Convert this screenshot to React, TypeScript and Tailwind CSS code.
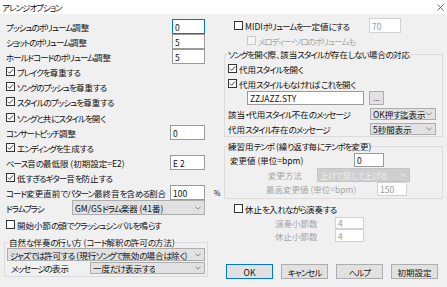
import React from "react";

// Meiryo UI draws kana narrower than kanji; tighten kana runs to match
const J = (s: string) =>
  s.split(/([\u3041-\u30ff]+)/).map((p, i) =>
    /[\u3041-\u30ff]/.test(p) ? (
      <span key={i} className="tracking-[-1px]">
        {p}
      </span>
    ) : (
      p
    )
  );

const Check = ({ checked = false, disabled = false }: { checked?: boolean; disabled?: boolean }) => (
  <span
    className={`w-[9px] h-[9px] border flex items-center justify-center shrink-0 ${
      disabled ? "border-[#c8c8c8] bg-[#f4f4f4]" : "border-[#333] bg-white"
    }`}
  >
    {checked && (
      <svg viewBox="0 0 9 9" className="w-[7px] h-[7px]">
        <path d="M1.2 4.6 L3.4 6.8 L7.8 1.8" stroke="#222" fill="none" strokeWidth="1.1" />
      </svg>
    )}
  </span>
);

const CheckRow = ({
  label,
  checked = false,
  disabled = false,
  className = "",
}: {
  label: string;
  checked?: boolean;
  disabled?: boolean;
  className?: string;
}) => (
  <div className={`flex items-center h-[15px] gap-[2px] ${className}`}>
    <Check checked={checked} disabled={disabled} />
    <span className={`whitespace-nowrap ${disabled ? "text-[#a6a6a6]" : ""}`}>{J(label)}</span>
  </div>
);

const TextBox = ({
  value,
  w,
  focused = false,
  disabled = false,
}: {
  value: string;
  w: string;
  focused?: boolean;
  disabled?: boolean;
}) => (
  <div
    className={`${w} h-full border bg-white flex items-center px-[2px] shrink-0 ${
      focused ? "border-[#0078d7]" : disabled ? "border-[#d2d2d2] text-[#9a9a9a]" : "border-[#9a9a9a]"
    }`}
  >
    {value}
  </div>
);

const Chevron = ({ color = "#707070" }: { color?: string }) => (
  <svg viewBox="0 0 7 4" className="w-[6px] h-[4px] shrink-0">
    <path d="M0.5 0.5 L3.5 3.3 L6.5 0.5" stroke={color} fill="none" strokeWidth="0.9" />
  </svg>
);

const Combo = ({
  value,
  w,
  disabled = false,
}: {
  value: string;
  w: string;
  disabled?: boolean;
}) => (
  <div
    className={`${w} h-full border flex items-center justify-between pl-[2px] pr-[3px] shrink-0 ${
      disabled ? "bg-[#cfcfcf] border-[#c4c4c4] text-[#ededed]" : "bg-[#e1e1e1] border-[#adadad]"
    }`}
  >
    <span className="whitespace-nowrap overflow-hidden">{J(value)}</span>
    <Chevron color={disabled ? "#ededed" : "#707070"} />
  </div>
);

const Btn = ({ label, primary = false }: { label: string; primary?: boolean }) => (
  <div
    className={`w-[47px] h-[15px] bg-[#e1e1e1] border flex items-center justify-center ${
      primary ? "border-[#0078d7]" : "border-[#adadad]"
    }`}
  >
    {J(label)}
  </div>
);

const LabelRow = ({ label, children, lw }: { label: string; children: React.ReactNode; lw: string }) => (
  <div className="flex items-center h-[15px]">
    <span className={`${lw} shrink-0 whitespace-nowrap`}>{J(label)}</span>
    {children}
  </div>
);

export default function App() {
  return (
    <div className="w-[447px] h-[287px] bg-[#f0f0f0] overflow-hidden text-[8.5px] leading-[12px] text-[#111] font-['Noto_Sans_CJK_JP',sans-serif] [font-feature-settings:'palt']">
      <div className="h-[14px] bg-white flex items-center justify-between pl-[2px] pr-[3px]">
        <span>{J("アレンジオプション")}</span>
        <svg viewBox="0 0 8 8" className="w-[7px] h-[7px]">
          <path d="M0.5 0.5 L7.5 7.5 M7.5 0.5 L0.5 7.5" stroke="#333" strokeWidth="0.8" />
        </svg>
      </div>

      <div className="flex">
        {/* left column */}
        <div className="w-[222px] shrink-0 pl-[6px] pt-[5px] flex flex-col">
          <LabelRow label="プッシュのボリューム調整" lw="w-[166px]">
            <TextBox value="0" w="w-[33px]" focused />
          </LabelRow>
          <LabelRow label="ショットのボリューム調整" lw="w-[166px]">
            <TextBox value="5" w="w-[33px]" />
          </LabelRow>
          <LabelRow label="ホールドコードのボリューム調整" lw="w-[166px]">
            <TextBox value="5" w="w-[33px]" />
          </LabelRow>
          <CheckRow label="ブレイクを尊重する" checked />
          <CheckRow label="ソングのプッシュを尊重する" checked />
          <CheckRow label="スタイルのプッシュを尊重する" checked />
          <CheckRow label="ソングと共にスタイルを開く" checked className="mt-[1px]" />
          <LabelRow label="コンサートピッチ調整" lw="w-[164px]">
            <TextBox value="0" w="w-[35px]" />
          </LabelRow>
          <CheckRow label="エンディングを生成する" checked />
          <LabelRow label="ベース音の最低限 (初期設定=E2)" lw="w-[164px]">
            <TextBox value="E 2" w="w-[35px]" />
          </LabelRow>
          <CheckRow label="低すぎるギター音を防止する" checked />
          <LabelRow label="コード変更直前でパターン最終音を含める割合" lw="w-[164px]">
            <TextBox value="100" w="w-[35px]" />
            <span className="ml-[9px] text-[7px]">%</span>
          </LabelRow>
          <LabelRow label="ドラムブラシ" lw="w-[66px]">
            <Combo value="GM/GSドラム楽器 (41番)" w="w-[133px]" />
          </LabelRow>
          <CheckRow label="開始小節の頭でクラッシュシンバルを鳴らす" className="mt-[2px]" />

          <fieldset className="mt-[4px] -ml-[2px] w-[204px] border border-[#dcdcdc] px-[2px] pb-[2px]">
            <legend className="ml-[2px] leading-[12px]">{J("自然な伴奏の行い方 (コード解釈の許可の方法)")}</legend>
            <div className="h-[13px] flex">
              <Combo value="ジャズでは許可する (現行ソングで無効の場合は除く)" w="w-[198px]" />
            </div>
            <div className="h-[12px] flex items-center mt-[1px]">
              <span className="w-[83px] shrink-0 pl-[4px]">{J("メッセージの表示")}</span>
              <Combo value="一度だけ表示する" w="w-[115px]" />
            </div>
          </fieldset>
        </div>

        {/* right column */}
        <div className="w-[222px] shrink-0 pt-[4px] flex flex-col">
          <div className="flex items-center h-[15px] pl-[12px]">
            <div className="w-[135px] flex items-center gap-[2px]">
              <Check />
              <span>{J("MIDIボリュームを一定値にする")}</span>
            </div>
            <TextBox value="70" w="w-[32px]" disabled />
          </div>
          <CheckRow label="メロディー・ソロのボリュームも" disabled className="pl-[25px]" />

          <fieldset className="ml-[2px] w-[219px] border border-[#dcdcdc] px-[3px] pb-[1px]">
            <legend className="leading-[12px]">{J("ソングを開く際、該当スタイルが存在しない場合の対応")}</legend>
            <CheckRow label="代用スタイルを開く" checked className="mt-[1px]" />
            <CheckRow label="代用スタイルもなければ これを開く" checked />
            <div className="flex items-center h-[14px] pl-[19px]">
              <TextBox value="ZZJAZZ.STY" w="w-[117px]" />
              <div className="ml-[5px] w-[15px] h-full bg-[#e1e1e1] border border-[#adadad] flex items-center justify-center text-[7px]">
                ...
              </div>
            </div>
            <div className="flex items-center h-[12px] mt-[3px]">
              <span className="w-[142px] shrink-0">{J("該当・代用スタイル不在のメッセージ")}</span>
              <Combo value="OK押す迄表示" w="w-[66px]" />
            </div>
            <div className="flex items-center h-[12px] mt-[3px]">
              <span className="w-[142px] shrink-0">{J("代用スタイル存在のメッセージ")}</span>
              <Combo value="5秒間表示" w="w-[66px]" />
            </div>
          </fieldset>

          <fieldset className="mt-[3px] ml-[2px] w-[219px] border border-[#dcdcdc] px-[5px] pb-[2px]">
            <legend className="leading-[12px] ml-[-2px]">{J("練習用テンポ (繰り返す毎にテンポを変更)")}</legend>
            <div className="flex items-center h-[14px] mt-[1px]">
              <span className="w-[124px] shrink-0">{J("変更値 (単位=bpm)")}</span>
              <TextBox value="0" w="w-[30px]" />
            </div>
            <div className="flex items-center h-[14px] mt-[1px]">
              <span className="w-[87px] shrink-0 pl-[38px] text-[#a6a6a6]">{J("変更方法")}</span>
              <Combo value="上げて戻して上げる" w="w-[93px]" disabled />
            </div>
            <div className="flex items-center h-[14px]">
              <span className="w-[147px] shrink-0 pl-[36px] text-[#a6a6a6]">{J("最高変更値 (単位=bpm)")}</span>
              <TextBox value="150" w="w-[30px]" disabled />
            </div>
          </fieldset>

          <CheckRow label="休止を入れながら演奏する" className="pl-[12px] mt-[2px]" />
          <div className="flex items-center h-[12px] mt-[1px]">
            <span className="w-[113px] shrink-0 pl-[53px] text-[#a6a6a6]">{J("演奏小節数")}</span>
            <TextBox value="4" w="w-[29px]" disabled />
          </div>
          <div className="flex items-center h-[13px]">
            <span className="w-[113px] shrink-0 pl-[53px] text-[#a6a6a6]">{J("休止小節数")}</span>
            <TextBox value="4" w="w-[29px]" disabled />
          </div>

          <div className="flex gap-[8px] pl-[4px] mt-[22px]">
            <Btn label="OK" primary />
            <Btn label="キャンセル" />
            <Btn label="ヘルプ" />
            <Btn label="初期設定" />
          </div>
        </div>
      </div>
    </div>
  );
}
